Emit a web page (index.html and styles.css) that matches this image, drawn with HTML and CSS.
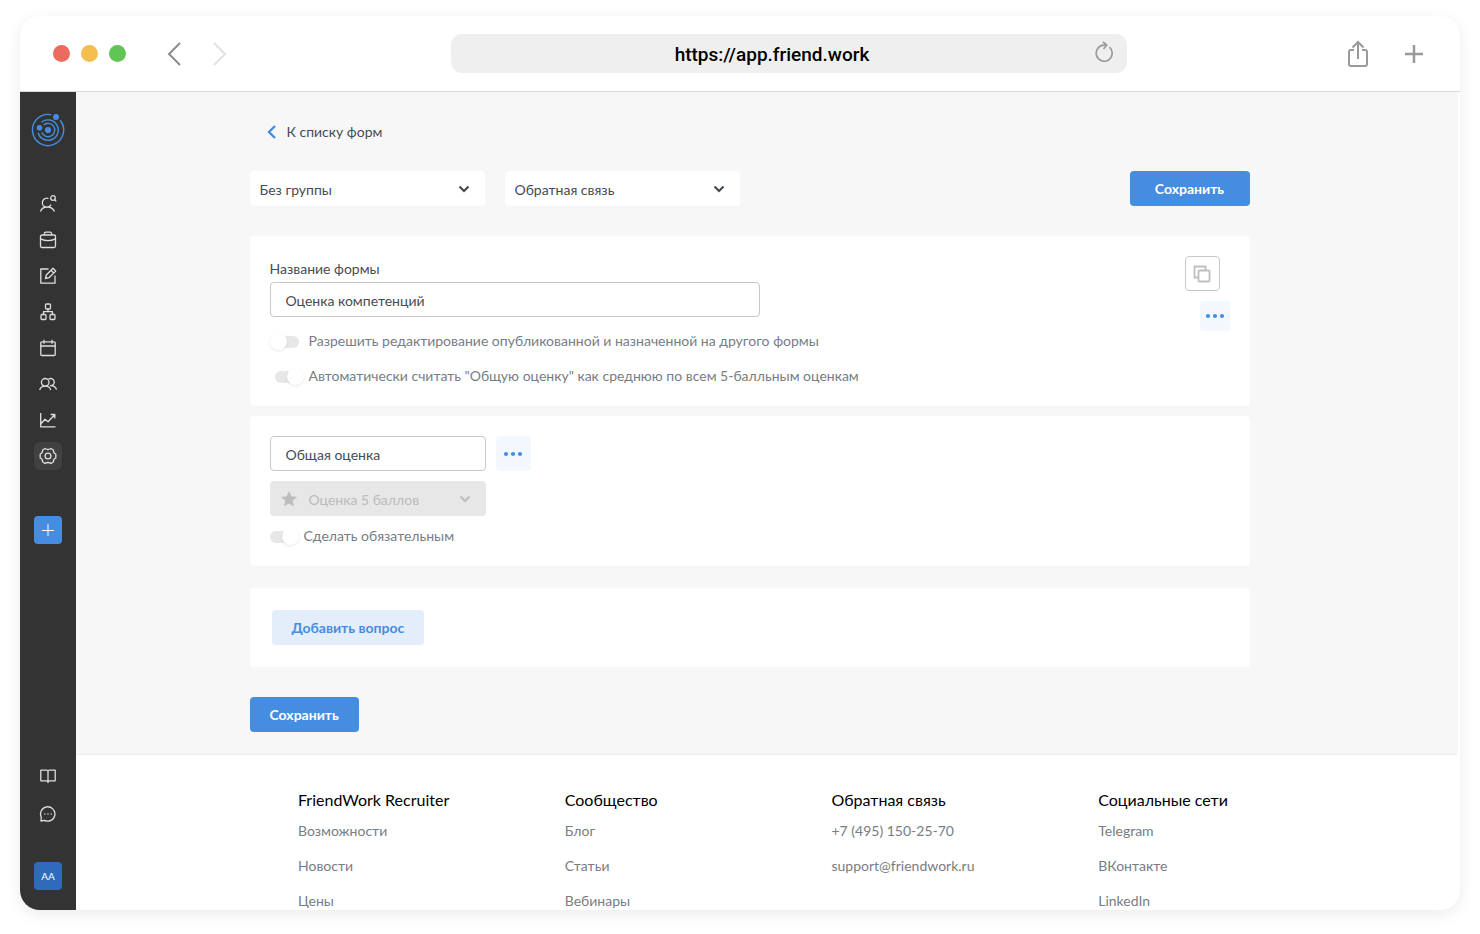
FILE: index.html
```html
<!DOCTYPE html>
<html lang="ru">
<head>
<meta charset="utf-8">
<meta name="viewport" content="width=device-width, initial-scale=1">
<title>FriendWork Recruiter</title>
<link rel="stylesheet" href="styles.css">
</head>
<body>
<div class="window">
  <header class="browser-bar">
    <div class="lights">
      <span class="light light-red"></span>
      <span class="light light-yellow"></span>
      <span class="light light-green"></span>
    </div>
    <div class="history">
      <button class="plain" type="button" aria-label="Back"><svg width="16" height="24" viewBox="0 0 16 24" fill="none" stroke="#8c8c8c" stroke-width="2"><path d="M14 1 3 12 14 23"/></svg></button>
      <button class="plain" type="button" aria-label="Forward"><svg width="16" height="24" viewBox="0 0 16 24" fill="none" stroke="#e2e2e2" stroke-width="2"><path d="M2 1 13 12 2 23"/></svg></button>
    </div>
    <div class="address">
      <input class="address-input" type="text" value="https://app.friend.work" aria-label="Address">
      <button class="plain reload" type="button" aria-label="Reload"><svg width="20" height="22" viewBox="0 0 20 22" fill="none" stroke="#9a9a9a" stroke-width="1.700"><path d="M15.500 6.200A8 8 0 1 1 10 4.200H12.500"/><path d="M9 0.800 12.700 4.200 9.500 8"/></svg></button>
    </div>
    <div class="browser-actions">
      <button class="plain" type="button" aria-label="Share"><svg width="22" height="28" viewBox="0 0 22 28" fill="none" stroke="#999" stroke-width="2"><path d="M7 10H4Q2 10 2 12V24Q2 26 4 26H18Q20 26 20 24V12Q20 10 18 10H15M11 19V2M5.500 7.500 11 2 16.500 7.500"/></svg></button>
      <button class="plain" type="button" aria-label="New tab"><svg width="20" height="20" viewBox="0 0 20 20" stroke="#999" stroke-width="2.500"><path d="M10 1V19M1 10H19"/></svg></button>
    </div>
  </header>

  <div class="app">
    <nav class="sidebar" aria-label="Меню">
      <a class="logo" href="#" aria-label="FriendWork"><svg width="34" height="34" viewBox="0 0 34 34" fill="none" stroke="#458de0" stroke-width="1.400"><path d="M20.200 1.700A15.600 15.600 0 1 0 29.200 7.200"/><path d="M10.600 9.200A10.200 10.200 0 1 1 7.200 19.700"/><path d="M12.600 12A6.700 6.700 0 1 1 10.800 19.500"/><circle cx="17" cy="17" r="3.100" fill="#458de0" stroke="none"/><circle cx="25" cy="4" r="3" fill="#458de0" stroke="none"/><circle cx="8.500" cy="14.800" r="2.800" fill="#458de0" stroke="none"/></svg></a>
      <div class="nav-list">
        <a class="nav-item" href="#" aria-label="Кандидаты"><svg class="icon" viewBox="0 0 18 18"><path d="M9.500 3.500A4.500 4.500 0 1 0 12 9.500M1.500 16.500Q3 12 8.300 12 13.500 12 15.500 16.500"/><circle cx="14" cy="3" r="2.300"/><path d="M15.700 4.700 17.300 6.400"/></svg></a>
        <a class="nav-item" href="#" aria-label="Вакансии"><svg class="icon" viewBox="0 0 18 18"><rect x="1.500" y="4" width="15" height="12.500" rx="1.500"/><path d="M5.500 4V2.500Q5.500 1.200 6.800 1.200H11.200Q12.500 1.200 12.500 2.500V4M1.500 7.800Q9 11.500 16.500 7.800"/></svg></a>
        <a class="nav-item" href="#" aria-label="Формы"><svg class="icon" viewBox="0 0 18 18"><path d="M9.500 2H1.800V16.200H16V8.500M6.500 11.500 7.300 8 14 1.300 16.700 4 10 10.700ZM12 3.300 14.700 6"/></svg></a>
        <a class="nav-item" href="#" aria-label="Структура"><svg class="icon" viewBox="0 0 18 18"><rect x="6.500" y="1" width="5" height="5" rx="1"/><rect x="2" y="11.500" width="5" height="5" rx="1"/><rect x="11" y="11.500" width="5" height="5" rx="1"/><path d="M9 6V8.700M4.500 11.500V8.700H13.500V11.500"/></svg></a>
        <a class="nav-item" href="#" aria-label="Календарь"><svg class="icon" viewBox="0 0 18 18"><rect x="1.800" y="2.800" width="14.400" height="13.700" rx="1"/><path d="M1.800 7H16.200M5 0.800V4.800M13 0.800V4.800"/></svg></a>
        <a class="nav-item" href="#" aria-label="Команда"><svg class="icon" viewBox="0 0 18 18"><circle cx="6.200" cy="7.300" r="3.800"/><path d="M0.700 15Q1.700 11.200 6.200 11.200 10.700 11.200 11.700 15M9.500 4.200A3.600 3.600 0 1 1 11.500 10.700Q16.500 10.700 17.500 14.700"/></svg></a>
        <a class="nav-item" href="#" aria-label="Отчёты"><svg class="icon" viewBox="0 0 18 18"><path d="M1.700 2V15.800H16.500M1.700 13 6 8.200 9 10.800 15.200 4.200M11.700 3.500H15.800V7.500"/></svg></a>
        <a class="nav-item nav-item-active" href="#" aria-label="Настройки"><svg class="icon" viewBox="0 0 18 18"><circle cx="9" cy="9" r="2.900"/><path d="M6 1.500Q9 3.500 12 1.500L14.500 3.200Q14 6 16.800 7V11Q14 12 14.500 14.800L12 16.500Q9 14.500 6 16.500L3.500 14.800Q4 12 1.200 11V7Q4 6 3.500 3.200Z"/></svg></a>
      </div>
      <button class="nav-add" type="button" aria-label="Добавить"><svg width="14" height="14" viewBox="0 0 14 14" stroke="#fff" stroke-width="1"><path d="M1 7.500H13M7 1V13"/></svg></button>
      <div class="nav-bottom">
        <a class="nav-item" href="#" aria-label="Справка"><svg class="icon" viewBox="0 0 18 18"><path d="M9 4.500Q9 3.200 7.500 3.200H1.800V13.800H7.500Q9 13.800 9 15.500 9 13.800 10.500 13.800H16.200V3.200H10.500Q9 3.200 9 4.500V15.500"/></svg></a>
        <a class="nav-item" href="#" aria-label="Чат"><svg class="icon" viewBox="0 0 18 18"><path d="M2 16 2.300 12.200A7.200 7.200 0 1 1 5.500 15.400Z"/><path d="M5.300 9H6.300M8.500 9H9.500M11.700 9H12.700" stroke-width="1.500"/></svg></a>
        <button class="avatar" type="button">AA</button>
      </div>
    </nav>

    <div class="page">
      <main class="main">
        <div class="content">
          <a class="back" href="#"><svg width="10" height="14" viewBox="0 0 10 14" fill="none" stroke="#458de0" stroke-width="2.400"><path d="M8 1 2 7 8 13"/></svg>К списку форм</a>

          <div class="toolbar">
            <div class="select-box">
              <select class="select" aria-label="Группа"><option>Без группы</option></select>
              <svg class="chevron" width="12" height="8" viewBox="0 0 12 8"><path d="M1.500 1.500 6 6 10.500 1.500"/></svg>
            </div>
            <div class="select-box">
              <select class="select" aria-label="Тип формы"><option>Обратная связь</option></select>
              <svg class="chevron" width="12" height="8" viewBox="0 0 12 8"><path d="M1.500 1.500 6 6 10.500 1.500"/></svg>
            </div>
            <button class="btn btn-wide" type="button">Сохранить</button>
          </div>

          <section class="card card-form">
            <div class="form-fields">
              <label class="label" for="form-name">Название формы</label>
              <input class="field field-name" id="form-name" type="text" value="Оценка компетенций">
              <label class="toggle-row toggle-row-first"><input class="toggle" type="checkbox">Разрешить редактирование опубликованной и назначенной на другого формы</label>
              <label class="toggle-row toggle-row-indent"><input class="toggle" type="checkbox" checked>Автоматически считать "Общую оценку" как среднюю по всем 5-балльным оценкам</label>
            </div>
            <div class="form-actions">
              <button class="copy" type="button" aria-label="Копировать"><svg width="18" height="18" viewBox="0 0 18 18" fill="none" stroke="#bfbfbf" stroke-width="1.800"><path d="M5 12.500H1.500V1.500H12.500V5"/><rect x="5.500" y="5.500" width="11" height="11" rx="1"/></svg></button>
              <button class="more more-small" type="button" aria-label="Ещё"><svg width="20" height="6" viewBox="0 0 20 6" fill="#458de0"><circle cx="3" cy="3" r="2.100"/><circle cx="10" cy="3" r="2.100"/><circle cx="17" cy="3" r="2.100"/></svg></button>
            </div>
          </section>

          <section class="card card-question">
            <div class="question-row">
              <input class="field field-question" type="text" value="Общая оценка" aria-label="Вопрос">
              <button class="more" type="button" aria-label="Ещё"><svg width="20" height="6" viewBox="0 0 20 6" fill="#458de0"><circle cx="3" cy="3" r="2.100"/><circle cx="10" cy="3" r="2.100"/><circle cx="17" cy="3" r="2.100"/></svg></button>
            </div>
            <div class="select-box select-box-rating">
              <svg class="star" width="16" height="16" viewBox="0 0 16 16" fill="#bdbdbd"><path d="M8 0 10.300 5.300 16 5.900 11.700 9.700 13 15.500 8 12.500 3 15.500 4.300 9.700 0 5.900 5.700 5.300Z"/></svg>
              <select class="select select-rating" aria-label="Тип ответа" disabled><option>Оценка 5 баллов</option></select>
              <svg class="chevron" width="12" height="8" viewBox="0 0 12 8"><path d="M1.500 1.500 6 6 10.500 1.500"/></svg>
            </div>
            <label class="toggle-row"><input class="toggle" type="checkbox" checked>Сделать обязательным</label>
          </section>

          <section class="card card-add">
            <button class="btn btn-light" type="button">Добавить вопрос</button>
          </section>

          <button class="btn" type="button">Сохранить</button>
        </div>
      </main>

      <footer class="footer">
        <div class="footer-col">
          <h2 class="footer-title">FriendWork Recruiter</h2>
          <a class="footer-link" href="#">Возможности</a>
          <a class="footer-link" href="#">Новости</a>
          <a class="footer-link" href="#">Цены</a>
        </div>
        <div class="footer-col">
          <h2 class="footer-title">Сообщество</h2>
          <a class="footer-link" href="#">Блог</a>
          <a class="footer-link" href="#">Статьи</a>
          <a class="footer-link" href="#">Вебинары</a>
        </div>
        <div class="footer-col">
          <h2 class="footer-title">Обратная связь</h2>
          <a class="footer-link" href="#">+7 (495) 150-25-70</a>
          <a class="footer-link" href="#">support@friendwork.ru</a>
        </div>
        <div class="footer-col">
          <h2 class="footer-title">Социальные сети</h2>
          <a class="footer-link" href="#">Telegram</a>
          <a class="footer-link" href="#">ВКонтакте</a>
          <a class="footer-link" href="#">LinkedIn</a>
        </div>
      </footer>
    </div>
  </div>
</div>
</body>
</html>
```
FILE: styles.css
```css
* { box-sizing: border-box; }

body {
  margin: 0;
  height: 100vh;
  padding: 16px 20px 24px;
  background: #fff;
  color: #454c55;
  font: 14px/20px Lato, "Open Sans", sans-serif;
}

button, input, select { font: inherit; color: inherit; margin: 0; }
button { border: 0; padding: 0; cursor: pointer; }
a { color: inherit; text-decoration: none; }
svg { display: block; flex: none; }

.window {
  display: flex;
  flex-direction: column;
  height: 100%;
  overflow: hidden;
  border-radius: 20px;
  background: #fff;
  box-shadow: 0 4px 16px rgba(0, 0, 0, 0.08);
}

/* Browser bar */
.browser-bar {
  display: flex;
  align-items: center;
  flex: none;
  height: 76px;
  padding: 0 36px 0 33px;
  border-bottom: 1px solid #d9d9d9;
}
.lights { display: flex; gap: 11px; }
.light { width: 17px; height: 17px; border-radius: 50%; }
.light-red { background: #ec6a5e; }
.light-yellow { background: #f4bf4f; }
.light-green { background: #61c554; }
.history { display: flex; gap: 30px; margin-left: 40px; }
.plain { background: none; }
.address {
  position: relative;
  flex: 1;
  margin: 0 220px 0 223px;
}
.address-input {
  display: block;
  width: 100%;
  height: 39px;
  padding: 2px 34px 0 0;
  border: 0;
  border-radius: 11px;
  background: #efefef;
  color: #000;
  font: 500 19px/24px Roboto, sans-serif;
  text-align: center;
}
.reload { position: absolute; right: 13px; top: 7px; }
.browser-actions { display: flex; align-items: center; gap: 35px; }

/* Sidebar */
.app { display: flex; flex: 1; min-height: 0; }
.sidebar {
  display: flex;
  flex-direction: column;
  align-items: center;
  flex: none;
  width: 56px;
  padding: 21px 0 20px;
  background: #333;
}
.nav-list { display: flex; flex-direction: column; gap: 8px; margin: 43px 0 46px; }
.nav-item {
  display: flex;
  align-items: center;
  justify-content: center;
  width: 28px;
  height: 28px;
  border-radius: 6px;
}
.nav-item-active { background: #414141; }
.icon {
  width: 18px;
  height: 18px;
  fill: none;
  stroke: #dedede;
  stroke-width: 1.3;
  stroke-linejoin: round;
}
.nav-add, .avatar {
  display: flex;
  align-items: center;
  justify-content: center;
  width: 28px;
  height: 28px;
  border-radius: 4px;
  background: #458de0;
}
.nav-bottom { display: flex; flex-direction: column; gap: 10px; margin-top: auto; }
.avatar { margin-top: 24px; background: #2f6bba; color: #fff; font-size: 10px; }

/* Page */
.page { flex: 1; min-width: 0; overflow: hidden; }
.main {
  margin-right: 2px;
  padding: 30px 35px 22px 0;
  background: #f7f7f7;
  border-bottom: 1px solid #f0f0f0;
}
.content { max-width: 1000px; margin: 0 auto; }
.back { display: flex; align-items: center; gap: 10px; width: fit-content; padding-left: 17px; }
.toolbar { display: flex; gap: 20px; margin: 29px 0 30px; }
.toolbar .btn { margin-left: auto; }

.select-box { position: relative; width: 235px; }
.select {
  display: block;
  width: 100%;
  height: 35px;
  padding: 2px 30px 0 10px;
  border: 0;
  border-radius: 4px;
  background: #fff;
  appearance: none;
}
.chevron {
  position: absolute;
  top: 14px;
  right: 15px;
  fill: none;
  stroke: #454c55;
  stroke-width: 2.2;
  pointer-events: none;
}
.select-box-rating { width: 216px; margin: 10px 0; }
.select-rating {
  padding-left: 39px;
  background: #e7e7e7;
  color: #bbb;
  opacity: 1;
}
.star { position: absolute; left: 11px; top: 10px; }
.select-box-rating .chevron { stroke: #bdbdbd; }

.btn {
  height: 35px;
  padding: 0 20px;
  border-radius: 4px;
  background: #458de0;
  color: #fff;
  font-weight: 700;
}
.btn-wide { width: 120px; }
.btn-light { background: #e3eefa; color: #458de0; }

.card { border-radius: 4px; background: #fff; }
.card-form {
  display: flex;
  justify-content: space-between;
  margin-bottom: 10px;
  padding: 20px;
}
.card-question { margin-bottom: 22px; padding: 20px; }
.card-add { margin-bottom: 30px; padding: 22px; }
.form-fields { display: flex; flex-direction: column; align-items: flex-start; }
.label { padding: 3px 0; }
.field {
  height: 35px;
  padding: 1px 15px 0;
  border: 1px solid #c8c8c8;
  border-radius: 4px;
  background: #fff;
}
.field-name { width: 490px; max-width: 100%; }
.field-question { width: 216px; }
.question-row { display: flex; gap: 10px; }

.toggle-row { display: flex; align-items: center; gap: 5px; color: #777d85; }
.toggle-row-first { gap: 10px; margin: 14px 0 15px; }
.toggle-row-indent { padding-left: 5px; }
.toggle {
  position: relative;
  flex: none;
  width: 29px;
  height: 17px;
  appearance: none;
}
.toggle::before {
  content: "";
  position: absolute;
  inset: 3px 0 2px 1px;
  border-radius: 6px;
  background: #e7e7e7;
}
.toggle::after {
  content: "";
  position: absolute;
  left: 0;
  top: 0;
  width: 17px;
  height: 17px;
  border-radius: 50%;
  background: #fff;
  box-shadow: 0 1px 3px rgba(0, 0, 0, 0.1);
}
.toggle:checked::before { left: 0; right: 1px; }
.toggle:checked::after { left: 12px; }

.form-actions { display: flex; flex-direction: column; align-items: flex-end; gap: 10px; }
.copy, .more {
  display: flex;
  align-items: center;
  justify-content: center;
  width: 35px;
  height: 35px;
  border-radius: 4px;
}
.copy { margin-right: 10px; border: 1px solid #c8c8c8; background: #fff; }
.more { background: #f2f8fd; }
.more-small { width: 30px; height: 30px; }

/* Footer */
.footer {
  display: grid;
  grid-template-columns: repeat(4, 1fr);
  padding: 35px 95px 0 222px;
}
.footer-col { display: flex; flex-direction: column; gap: 15px; }
.footer-title { margin: 0 0 -4px; color: #000; font-size: 16px; font-weight: 400; line-height: 20px; }
.footer-link { color: #777d85; }
```
